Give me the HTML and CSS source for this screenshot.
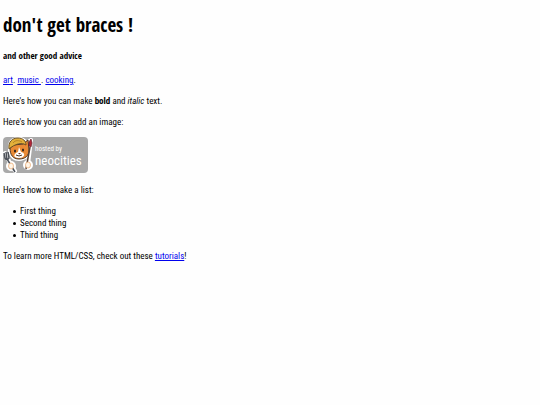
FILE: index.html
```html
<!DOCTYPE html>
<html lang="en">
<head>
    <meta charset="UTF-8">
    <meta name="viewport" content="width=device-width, initial-scale=1.0">
    <title>don't get braces !</title>
    <link rel="stylesheet" href="styles.css">
</head>
<body>
    <h1 class="title">don't get braces !</h1>
    <h4 class="subtitle">and other good advice</h4>

    <p><a href="art.html">art</a>. <a href="music.html">music&nbsp;</a>. <a href="cooking.html">cooking</a>.</p>

    <p>Here's how you can make <strong>bold</strong> and <em>italic</em> text.</p>

    <p>Here's how you can add an image:</p>

    <svg class="badge" viewBox="0 0 85 36" role="img" aria-label="hosted by neocities">
        <rect x="0" y="0" width="85" height="36" rx="4" fill="#a9a9a9"/>
        <!-- white edge round the cat and its tools -->
        <g fill="#fff" stroke="#fff" stroke-width="2" stroke-linejoin="round" stroke-linecap="round">
            <path d="M6 10 C6 3 11 1 16 1 C21 1 23 4 24 6 L26 3 L27 12 C27 19 22 23 16 23 C10 23 7 18 6 14Z"/>
            <path d="M2 16 L6 24 L12 34 M28 3 L25 27" fill="none" stroke-width="4"/>
            <circle cx="8" cy="29" r="4"/>
            <circle cx="25" cy="28" r="4"/>
        </g>
        <!-- cat head -->
        <path d="M7 11 L11 8 L20 7 L25 3 L26 13 C26 19 22 22 16 22 C10 22 7 18 7 11Z" fill="#e98a35" stroke="#4a3424" stroke-width="1"/>
        <path d="M16 10 L18 15 C23 16 22 21 16 21 C10 21 10 17 15 15Z" fill="#fff"/>
        <path d="M6 12 C5 5 9 1 15 1 C20 1 23 4 23 8 C18 5 12 7 6 12Z" fill="#e2b03a" stroke="#6b5024" stroke-width="1"/>
        <path d="M10 6 C12 3 16 3 19 5" fill="none" stroke="#b98427" stroke-width="1"/>
        <ellipse cx="12" cy="14" rx="1" ry="1.5" fill="#2b201b"/>
        <ellipse cx="20" cy="13" rx="1" ry="1.5" fill="#2b201b"/>
        <path d="M15 16 H18 L16.5 17.5Z" fill="#713020"/>
        <path d="M13 18 Q16 20 19 18" fill="none" stroke="#4a3424" stroke-width="1"/>
        <!-- fork -->
        <path d="M1 16 L2 21 Q4 24 6 21 L5 15 M3 15 L4 22 L12 35" fill="none" stroke="#4b5058" stroke-width="1.5"/>
        <ellipse cx="8" cy="29" rx="2.5" ry="3" fill="#fff5e8" stroke="#e6a56c" stroke-width=".7"/>
        <!-- paintbrush -->
        <path d="M27 10 L23 32" stroke="#5a4335" stroke-width="1.5"/>
        <path d="M26 9 L26 5 L28 2 L29 6 L28 10Z" fill="#b32738" stroke="#642029" stroke-width=".7"/>
        <ellipse cx="25" cy="28" rx="2.5" ry="3" fill="#fff5e8" stroke="#e6a56c" stroke-width=".7"/>
        <text class="badge-small" x="32" y="14">hosted by</text>
        <text class="badge-name" x="32" y="28">neocities</text>
    </svg>

    <p>Here's how to make a list:</p>

    <ul class="list">
        <li>First thing</li>
        <li>Second thing</li>
        <li>Third thing</li>
    </ul>

    <p>To learn more HTML/CSS, check out these <a href="tutorials.html">tutorials</a>!</p>
</body>
</html>
```

FILE: styles.css
```css
body {
    margin: 13px 3px;
    background-color: #fefefe;
    color: #000;
    font-family: "Roboto Condensed", "DejaVu Sans Condensed", sans-serif;
    font-size: 9px;
    line-height: 12px;
}
.title,
.subtitle {
    font-family: "Open Sans Condensed", "DejaVu Sans Condensed", sans-serif;
}
.title {
    margin: 0 0 13px;
    font-size: 19px;
    line-height: 24px;
}
.subtitle {
    margin: 0 0 12px;
    font-size: 9px;
}
p {
    margin: 9px 0;
}
a {
    color: #0000ee;
}
.badge {
    display: block;
    width: 85px;
    height: 36px;
    margin-bottom: 11px;
}
.badge-small,
.badge-name {
    fill: #fff;
}
.badge-small {
    font-size: 7px;
}
.badge-name {
    font-size: 13px;
}
.list {
    margin: 9px 0;
    padding-left: 10px;
    list-style: none;
}
.list li {
    display: flex;
    align-items: center;
    gap: 4px;
}
.list li::before {
    content: "";
    width: 3px;
    height: 3px;
    border-radius: 50%;
    background-color: #000;
}
```
